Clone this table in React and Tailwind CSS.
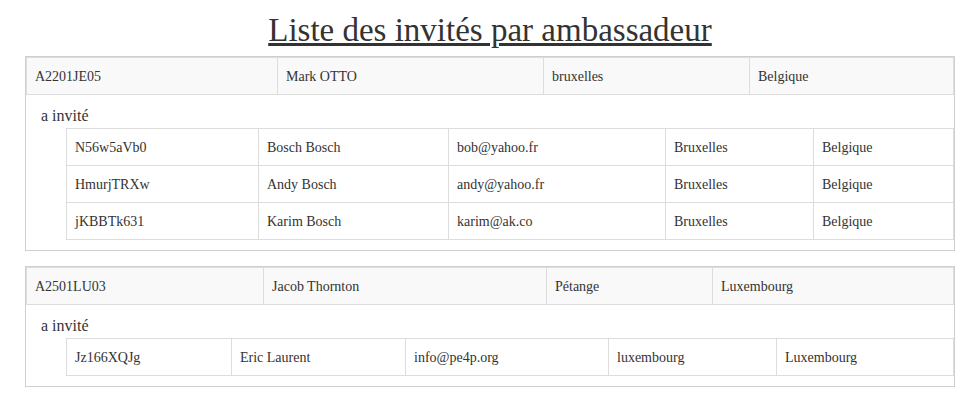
import React from "react";

const groups = [
  {
    head: ["A2201JE05", "Mark OTTO", "bruxelles", "Belgique"],
    headW: ["w-[250px]", "w-[266px]", "w-[206px]"],
    innerW: ["w-[191px]", "w-[190px]", "w-[217px]", "w-[148px]"],
    rows: [
      ["N56w5aVb0", "Bosch Bosch", "bob@yahoo.fr", "Bruxelles", "Belgique"],
      ["HmurjTRXw", "Andy Bosch", "andy@yahoo.fr", "Bruxelles", "Belgique"],
      ["jKBBTk631", "Karim Bosch", "karim@ak.co", "Bruxelles", "Belgique"],
    ],
  },
  {
    head: ["A2501LU03", "Jacob Thornton", "Pétange", "Luxembourg"],
    headW: ["w-[236px]", "w-[283px]", "w-[166px]"],
    innerW: ["w-[164px]", "w-[174px]", "w-[203px]", "w-[168px]"],
    rows: [["Jz166XQJg", "Eric Laurent", "info@pe4p.org", "luxembourg", "Luxembourg"]],
  },
];

function Group({ g }) {
  return (
    <div className="ml-[25px] w-[930px] border border-[#cfcfcf]">
      <div className="flex h-[38px] border border-[#ddd] bg-[#f9f9f9]">
        {g.head.map((t, i) => (
          <div
            key={i}
            className={`flex items-center px-2 ${i < 3 ? g.headW[i] : "flex-1"} ${i > 0 ? "border-l border-[#ddd]" : ""}`}
          >
            {t}
          </div>
        ))}
      </div>
      <div className="h-[33px] pl-[15px] pt-[10px] text-[16px] leading-[22px]">a invité</div>
      <div className="ml-[40px] border-x border-b border-[#ddd] mb-[10px]">
        {g.rows.map((r, ri) => (
          <div key={ri} className="flex h-[37px] border-t border-[#ddd]">
            {r.map((t, i) => (
              <div
                key={i}
                className={`flex items-center px-2 ${i < 4 ? g.innerW[i] : "flex-1"} ${i > 0 ? "border-l border-[#ddd]" : ""}`}
              >
                {t}
              </div>
            ))}
          </div>
        ))}
      </div>
    </div>
  );
}

export default function App() {
  return (
    <div className="w-[980px] h-[414px] bg-white text-[#333] text-[14px] [font-family:'Liberation_Serif',serif]">
      <div className="h-[56px] pt-[11px] text-center">
        <span className="text-[33px] leading-[38px] underline [font-family:'Liberation_Serif',serif]">Liste des invités par ambassadeur</span>
      </div>
      <Group g={groups[0]} />
      <div className="h-[15px]" />
      <Group g={groups[1]} />
    </div>
  );
}
